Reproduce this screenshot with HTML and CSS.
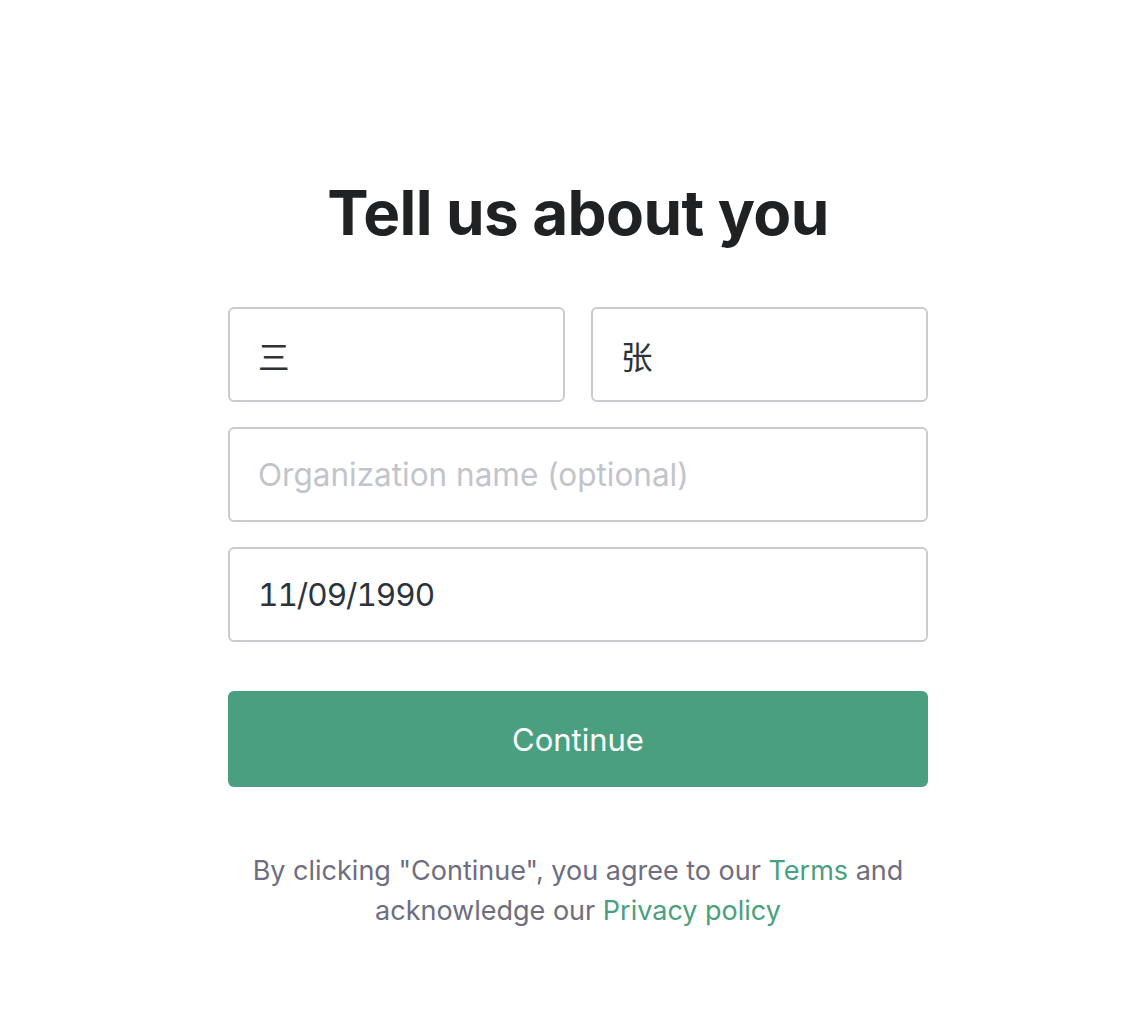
FILE: index.html
```html
<!DOCTYPE html>
<html lang="en">
<head>
<meta charset="utf-8">
<title>Tell us about you</title>
<link rel="stylesheet" href="styles.css">
</head>
<body>
<main class="page">
  <h1 class="title">Tell us about you</h1>
  <form class="form">
    <div class="row two">
      <input class="field" type="text" value="三">
      <input class="field" type="text" value="张">
    </div>
    <div class="row">
      <input class="field" type="text" placeholder="Organization name (optional)">
    </div>
    <div class="row">
      <input class="field date" type="text" value="11/09/1990">
    </div>
    <button class="btn" type="button">Continue</button>
  </form>
  <p class="legal">By clicking "Continue", you agree to our <a href="#">Terms</a> and<br>acknowledge our <a href="#">Privacy policy</a></p>
</main>
</body>
</html>
```
FILE: styles.css
```css
html, body {
  margin: 0;
  padding: 0;
  background: #ffffff;
}
body {
  font-family: Inter, "Noto Sans CJK SC", sans-serif;
  color: #202123;
}
.page {
  display: flex;
  flex-direction: column;
  align-items: center;
  padding-top: 176px;
  padding-left: 20px;
}
.title {
  margin: 0;
  font-size: 62px;
  font-weight: 700;
  line-height: 74px;
  letter-spacing: -0.6px;
  color: #202123;
}
.form {
  width: 700px;
  margin-top: 57px;
  display: flex;
  flex-direction: column;
  gap: 25px;
}
.row {
  display: flex;
  gap: 26px;
}
.field {
  flex: 1;
  min-width: 0;
  box-sizing: border-box;
  height: 95px;
  border: 2px solid #c9cbd1;
  border-radius: 6px;
  padding: 0 28px;
  font-family: Inter, "Noto Sans CJK SC", sans-serif;
  font-size: 31.5px;
  color: #2d333a;
  background: #fff;
  outline: none;
}
.field.date {
  font-feature-settings: "tnum";
  letter-spacing: -1px;
}
.field::placeholder {
  color: #c2c4cc;
}
.btn {
  margin-top: 24px;
  height: 96px;
  border: none;
  border-radius: 6px;
  background: #4a9f80;
  color: #fff;
  font-family: Inter, sans-serif;
  font-size: 31px;
  font-weight: 400;
  cursor: pointer;
}
.legal {
  margin: 64px 0 0;
  text-align: center;
  font-size: 27px;
  line-height: 40px;
  color: #6e6e80;
}
.legal a {
  color: #4a9f80;
  text-decoration: none;
}
```
